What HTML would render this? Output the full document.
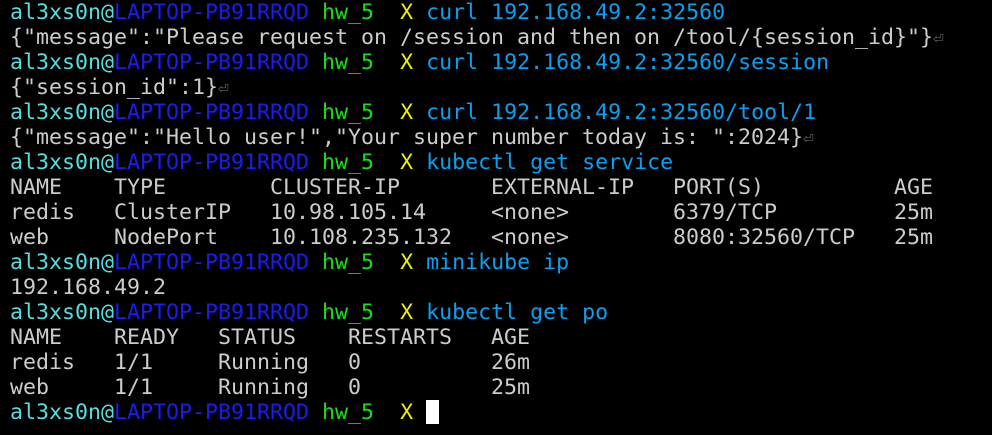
<!DOCTYPE html>
<html><head><meta charset="utf-8"><style>
html,body{margin:0;background:#000;width:992px;height:435px;overflow:hidden}
pre{margin:0;padding:0 0 0 10px;font-family:"DejaVu Sans Mono","Liberation Mono",monospace;font-size:21.6px;line-height:25px;color:#cccccc;white-space:pre}
pre div{height:25px;overflow:visible}
.u{color:#55dede}.h{color:#1c1cf0}.g{color:#16e016}.y{color:#f0f000;font-weight:normal}.c{color:#0aa0f0}.r{color:#666;font-size:18px;line-height:0}
.cur{display:inline-block;width:13px;height:24px;background:#fff;vertical-align:-5px;line-height:0}
</style></head><body><pre><div><span class="u">al3xs0n@</span><span class="h">LAPTOP-PB91RRQD</span> <span class="g">hw_5</span>  <span class="y">X</span> <span class="c">curl</span> <span class="c">192.168.49.2:32560</span></div><div>{"message":"Please request on /session and then on /tool/{session_id}"}<span class="r">⏎</span></div><div><span class="u">al3xs0n@</span><span class="h">LAPTOP-PB91RRQD</span> <span class="g">hw_5</span>  <span class="y">X</span> <span class="c">curl</span> <span class="c">192.168.49.2:32560/session</span></div><div>{"session_id":1}<span class="r">⏎</span></div><div><span class="u">al3xs0n@</span><span class="h">LAPTOP-PB91RRQD</span> <span class="g">hw_5</span>  <span class="y">X</span> <span class="c">curl</span> <span class="c">192.168.49.2:32560/tool/1</span></div><div>{"message":"Hello user!","Your super number today is: ":2024}<span class="r">⏎</span></div><div><span class="u">al3xs0n@</span><span class="h">LAPTOP-PB91RRQD</span> <span class="g">hw_5</span>  <span class="y">X</span> <span class="c">kubectl get service</span></div><div>NAME    TYPE        CLUSTER-IP       EXTERNAL-IP   PORT(S)          AGE</div><div>redis   ClusterIP   10.98.105.14     &lt;none&gt;        6379/TCP         25m</div><div>web     NodePort    10.108.235.132   &lt;none&gt;        8080:32560/TCP   25m</div><div><span class="u">al3xs0n@</span><span class="h">LAPTOP-PB91RRQD</span> <span class="g">hw_5</span>  <span class="y">X</span> <span class="c">minikube ip</span></div><div>192.168.49.2</div><div><span class="u">al3xs0n@</span><span class="h">LAPTOP-PB91RRQD</span> <span class="g">hw_5</span>  <span class="y">X</span> <span class="c">kubectl get po</span></div><div>NAME    READY   STATUS    RESTARTS   AGE</div><div>redis   1/1     Running   0          26m</div><div>web     1/1     Running   0          25m</div><div><span class="u">al3xs0n@</span><span class="h">LAPTOP-PB91RRQD</span> <span class="g">hw_5</span>  <span class="y">X</span> <span class="cur"></span></div></pre></body></html>
